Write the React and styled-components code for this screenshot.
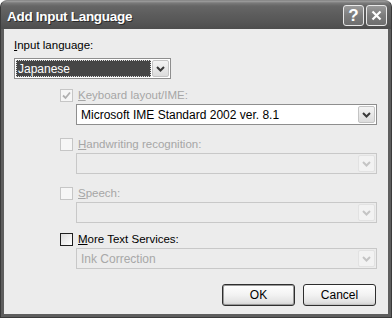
import React from "react";
import styled, { createGlobalStyle, css } from "styled-components";

const Global = createGlobalStyle`
  html, body { margin: 0; padding: 0; background: #ffffff; }
  body { font-family: "Liberation Sans", Arial, sans-serif; }
  * { box-sizing: border-box; }
`;

const Window = styled.div`
  width: 392px;
  height: 318px;
  display: flex;
  flex-direction: column;
  background: #5e5e5e;
  border-radius: 7px 7px 0 0;
  padding: 0 3px 3px 3px;
  border: 1px solid #3a3a3a;
  border-top-color: #8a8a8a;
`;

const TitleBar = styled.div`
  height: 28px;
  margin: 0 -3px;
  padding: 0 4px 0 6px;
  display: flex;
  align-items: center;
  justify-content: space-between;
  border-radius: 6px 6px 0 0;
  background: linear-gradient(
    to bottom,
    #a2a2a2 0px,
    #7a7a7a 2px,
    #666666 5px,
    #5c5c5c 14px,
    #555555 22px,
    #4d4d4d 28px
  );
`;

const Title = styled.span`
  color: #ffffff;
  font-weight: bold;
  font-size: 13.5px;
  letter-spacing: -0.3px;
  text-shadow: 1px 1px 0 #2a2a2a;
  margin-top: 3px;
`;

const TitleButtons = styled.div`
  display: flex;
  gap: 2px;
  margin-top: 1px;
`;

const CaptionButton = styled.div`
  width: 21px;
  height: 21px;
  border: 1px solid #e8e8e8;
  border-radius: 3px;
  background: linear-gradient(to bottom, #9a9a9a, #7c7c7c 50%, #6e6e6e);
  color: #ffffff;
  display: flex;
  align-items: center;
  justify-content: center;
  font-weight: bold;
  font-size: 17px;
  font-family: "Liberation Sans", Arial, sans-serif;
`;

const Content = styled.div`
  flex: 1;
  background: #ececec;
  padding: 10px 11px 0 10px;
  display: flex;
  flex-direction: column;
  font-size: 11.5px;
  color: #000;
`;

const Label = styled.div`
  height: 13px;
  line-height: 13px;
  color: ${(p) => (p.$disabled ? "#a6a6a6" : "#000")};
`;

const U = styled.span`
  text-decoration: underline;
  text-underline-offset: 1px;
`;

const SelectBox = styled.div`
  position: relative;
  height: 21px;
  width: ${(p) => p.$width || "auto"};
  margin-top: ${(p) => p.$mt || 0}px;
  margin-left: ${(p) => p.$ml || 0}px;
  border: 1px solid ${(p) => (p.$disabled ? "#c8c8c8" : "#8e8e8e")};
  background: ${(p) => (p.$disabled ? "#ececec" : "#ffffff")};
  display: flex;
  align-items: stretch;
  padding: 1px;
`;

const SelectText = styled.div`
  flex: 1;
  display: flex;
  align-items: center;
  padding-left: 3px;
  font-size: 12px;
  color: ${(p) => (p.$disabled ? "#a8a8a8" : "#000")};
  ${(p) =>
    p.$highlight &&
    css`
      background: #464646;
      color: #ffffff;
      outline: 1px dotted #e0e0e0;
      outline-offset: -1px;
      margin-right: 1px;
      padding-left: 2px;
    `}
`;

const ArrowButton = styled.div`
  width: 17px;
  display: flex;
  align-items: center;
  justify-content: center;
  border: 1px solid ${(p) => (p.$disabled ? "#e2e2e2" : "#c4c4c4")};
  border-radius: 2px;
  background: ${(p) =>
    p.$disabled
      ? "#f2f2f2"
      : "linear-gradient(to bottom, #f4f4f4, #dcdcdc)"};
`;

const CheckRow = styled.div`
  display: flex;
  align-items: center;
  gap: 5px;
  margin-left: ${(p) => p.$ml || 0}px;
  margin-top: ${(p) => p.$mt || 0}px;
  height: 13px;
`;

const Check = styled.div`
  width: 13px;
  height: 13px;
  border: 1px solid ${(p) => (p.$disabled ? "#c6c6c6" : "#1e1e1e")};
  background: ${(p) =>
    p.$disabled ? "#f6f6f6" : "linear-gradient(135deg, #dcdcdc, #ffffff)"};
  display: flex;
  align-items: center;
  justify-content: center;
`;

const Group = styled.div`
  display: flex;
  flex-direction: column;
  margin-top: ${(p) => p.$mt}px;
`;

const ButtonRow = styled.div`
  display: flex;
  justify-content: flex-end;
  gap: 8px;
  margin-top: 15px;
  padding-right: 1px;
`;

const Button = styled.div`
  width: 73px;
  height: 22px;
  border: 1px solid #2e2e2e;
  border-radius: 3px;
  background: linear-gradient(to bottom, #ffffff 0%, #f2f2f2 50%, #e2e2e2 85%, #cfcfcf 100%);
  box-shadow: ${(p) =>
    p.$default ? "inset 0 0 0 1px #9a9a9a" : "inset 0 -1px 0 #c4c4c4"};
  display: flex;
  align-items: center;
  justify-content: center;
  font-size: 12px;
  color: #000;
`;

const Chevron = ({ disabled }) => (
  <svg width="9" height="6" viewBox="0 0 9 6">
    <polyline
      points="1,1 4.5,4.5 8,1"
      fill="none"
      stroke={disabled ? "#c4c4c4" : "#3a3a3a"}
      strokeWidth="2"
    />
  </svg>
);

const Tick = ({ color }) => (
  <svg width="9" height="9" viewBox="0 0 9 9">
    <polyline
      points="1,4.5 3.5,7 8,1.5"
      fill="none"
      stroke={color}
      strokeWidth="1.8"
    />
  </svg>
);

const Select = ({ text, disabled, highlight, width, mt, ml }) => (
  <SelectBox $disabled={disabled} $width={width} $mt={mt} $ml={ml}>
    <SelectText $disabled={disabled} $highlight={highlight}>
      {text}
    </SelectText>
    <ArrowButton $disabled={disabled}>
      <Chevron disabled={disabled} />
    </ArrowButton>
  </SelectBox>
);

const Option = ({ mt, label, accel, checked, checkDisabled, labelDisabled, selectText, selectDisabled }) => (
  <Group $mt={mt}>
    <CheckRow $ml={46}>
      <Check $disabled={checkDisabled}>
        {checked && <Tick color="#b0b0b0" />}
      </Check>
      <Label $disabled={labelDisabled}>
        <U>{accel}</U>
        {label}
      </Label>
    </CheckRow>
    <Select text={selectText} disabled={selectDisabled} mt={2} ml={62} />
  </Group>
);

export default function App() {
  return (
    <>
      <Global />
      <Window>
        <TitleBar>
          <Title>Add Input Language</Title>
          <TitleButtons>
            <CaptionButton>?</CaptionButton>
            <CaptionButton>
              <svg width="11" height="11" viewBox="0 0 11 11">
                <path d="M1.5 1.5 L9.5 9.5 M9.5 1.5 L1.5 9.5" stroke="#fff" strokeWidth="2.2" />
              </svg>
            </CaptionButton>
          </TitleButtons>
        </TitleBar>
        <Content>
          <Label>
            <U>I</U>nput language:
          </Label>
          <Select text="Japanese" highlight width="157px" mt={6} />
          <Option
            mt={10}
            accel="K"
            label="eyboard layout/IME:"
            checked
            checkDisabled
            labelDisabled
            selectText="Microsoft IME Standard 2002 ver. 8.1"
          />
          <Option
            mt={13}
            accel="H"
            label="andwriting recognition:"
            checkDisabled
            labelDisabled
            selectText=""
            selectDisabled
          />
          <Option
            mt={13}
            accel="S"
            label="peech:"
            checkDisabled
            labelDisabled
            selectText=""
            selectDisabled
          />
          <Option
            mt={10}
            accel="M"
            label="ore Text Services:"
            selectText="Ink Correction"
            selectDisabled
          />
          <ButtonRow>
            <Button $default>OK</Button>
            <Button>Cancel</Button>
          </ButtonRow>
        </Content>
      </Window>
    </>
  );
}
